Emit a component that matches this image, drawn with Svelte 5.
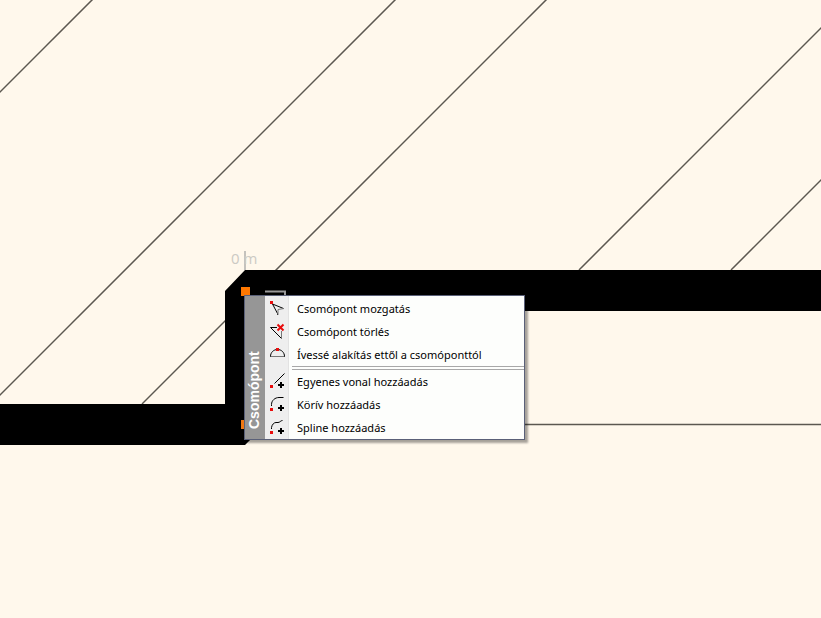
<script>
    let hatchLines = [
        { x1: 93, y1: -1, x2: -1, y2: 93 },
        { x1: 396, y1: -1, x2: -1, y2: 396 },
        { x1: 547, y1: -1, x2: 142, y2: 404 },
        { x1: 849, y1: 0, x2: 579, y2: 270 },
        { x1: 1001, y1: 0, x2: 731, y2: 270 }
    ];

    let menuGroups = [
        [
            { id: 'move', label: 'Csomópont mozgatás' },
            { id: 'delete', label: 'Csomópont törlés' },
            { id: 'curve', label: 'Ívessé alakítás ettől a csomóponttól' }
        ],
        [
            { id: 'line', label: 'Egyenes vonal hozzáadás' },
            { id: 'arc', label: 'Körív hozzáadás' },
            { id: 'spline', label: 'Spline hozzáadás' }
        ]
    ];

    let selected = '';

    function runCommand(id) {
        selected = id;
    }
</script>

<style>
    :global(body) {
        margin: 0;
        background: #fff8ec;
    }

    .canvas {
        position: relative;
        min-height: 100vh;
        overflow: hidden;
        background: #fff8ec;
    }

    .plan {
        position: absolute;
        inset: 0;
        width: 100%;
        height: 100%;
    }

    .hatch {
        stroke: #5c5850;
        stroke-width: 1.5;
    }

    .dimension {
        font-family: "Open Sans", "Segoe UI", sans-serif;
        font-size: 15px;
        fill: #cccac4;
    }

    .menu {
        position: absolute;
        left: 244px;
        top: 295px;
        display: flex;
        width: 279px;
        border: 1px solid #5a6078;
        background: #fdfefc;
        box-shadow: 3px 3px 2px rgba(0, 0, 0, 0.35);
    }

    .menu-title {
        box-sizing: border-box;
        width: 20px;
        padding: 10px 0 0 2px;
        background: #969696;
        color: #fff;
        font-family: "Liberation Sans", Arial, sans-serif;
        font-size: 14px;
        font-weight: 700;
        line-height: 18px;
        writing-mode: vertical-rl;
        transform: rotate(180deg);
    }

    .menu-body {
        flex: 1;
        padding-top: 1px;
        background: linear-gradient(90deg, #eeeeee 23px, #e2e2e2 23px, #e2e2e2 24px, #fdfefc 24px);
    }

    .menu-item {
        display: flex;
        align-items: center;
        width: 100%;
        height: 23px;
        padding: 0;
        border: none;
        background: none;
        color: #000;
        font-family: "Noto Sans", "Segoe UI", sans-serif;
        font-size: 11px;
        line-height: 23px;
        text-align: left;
        white-space: nowrap;
    }

    .menu-item:hover {
        background: #dbe6f5;
    }

    .icon {
        flex: none;
        width: 24px;
        height: 23px;
        margin-right: 8px;
        fill: none;
        stroke: #000;
    }

    .icon .node {
        fill: #e80c0c;
        stroke: none;
    }

    .icon .cross {
        stroke: #e80c0c;
        stroke-width: 2;
    }

    .icon .soft {
        stroke: #777;
    }

    .icon .plus {
        stroke: #000;
        stroke-width: 2;
    }

    .separator {
        height: 2px;
        margin: 0 0 0 27px;
        border: solid #a8a8a8;
        border-width: 1px 0;
    }
</style>

<div class="canvas">
    <svg class="plan" aria-hidden="true">
        {#each hatchLines as line}
            <line class="hatch" x1={line.x1} y1={line.y1} x2={line.x2} y2={line.y2} />
        {/each}
        <line class="hatch" x1="265" y1="424.5" x2="4000" y2="424.5" />
        <path d="M4000 270H245L225 291V404H0V445H245L265 425V311H4000Z" fill="#000" />
        <path d="M245 251V270" stroke="#c4c2bd" stroke-width="2" />
        <path d="M265 291.5H285V296" fill="none" stroke="#999" stroke-width="2" />
        <rect x="241" y="287" width="9" height="9" fill="#ff7800" />
        <rect x="241" y="420" width="9" height="9" fill="#f07814" />
        <text class="dimension" x="231" y="264">0 m</text>
    </svg>

    <div class="menu" role="menu" aria-label="Csomópont">
        <div class="menu-title">Csomópont</div>
        <div class="menu-body">
            {#each menuGroups as group, i}
                {#if i > 0}
                    <hr class="separator" />
                {/if}
                {#each group as item}
                    <button class="menu-item" role="menuitem" on:click={() => runCommand(item.id)}>
                        <svg class="icon" viewBox="0 0 24 23" aria-hidden="true">
                            {#if item.id === 'move'}
                                <path d="M12.5 18V16.5L7.5 7L18.5 11.5" />
                                <path class="soft" d="M19 11.5L13 12.5V18" />
                                <rect class="node" x="5" y="4" width="3" height="3" />
                            {:else if item.id === 'delete'}
                                <path d="M12 7.5H5.5L16.5 18.5" />
                                <path class="soft" d="M16.5 18.5V11" />
                                <path class="cross" d="M12.5 4.5L18.5 10.5M18.5 4.5L12.5 10.5" />
                            {:else if item.id === 'curve'}
                                <path class="soft" d="M5 13.5H20" />
                                <path d="M5.5 13.5C5.5 9.5 8.5 6.5 12.5 6.5S19.5 9.5 19.5 13.5" />
                                <rect class="node" x="11" y="5" width="3" height="3" />
                            {:else}
                                {#if item.id === 'line'}
                                    <path d="M9.5 13.5L19.5 3.5" />
                                {:else if item.id === 'arc'}
                                    <path d="M6.5 13V11.5C6.5 7.5 10 4.5 14 4.5H18.5" />
                                {:else}
                                    <path d="M6.5 13V11.5C7 8.5 9 6.5 11 6.5H13C15 6.5 15.5 4.5 17.5 4.5" />
                                {/if}
                                <rect class="node" x="5" y="15" width="3" height="3" />
                                <path class="plus" d="M13 15H19M16 12V18" />
                            {/if}
                        </svg>
                        {item.label}
                    </button>
                {/each}
            {/each}
        </div>
    </div>
</div>
